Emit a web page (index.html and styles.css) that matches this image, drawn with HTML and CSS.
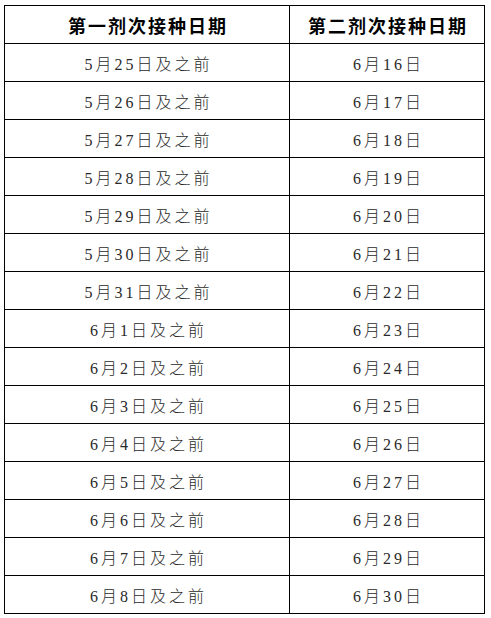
FILE: index.html
```html
<!DOCTYPE html>
<html lang="zh-CN">
<head>
<meta charset="utf-8">
<title>接种日期</title>
<link rel="stylesheet" href="styles.css">
</head>
<body>
<div class="table">
  <div class="cell head">第一剂次接种日期</div><div class="cell head">第二剂次接种日期</div>
  <div class="cell">5月25日及之前</div><div class="cell">6月16日</div>
  <div class="cell">5月26日及之前</div><div class="cell">6月17日</div>
  <div class="cell">5月27日及之前</div><div class="cell">6月18日</div>
  <div class="cell">5月28日及之前</div><div class="cell">6月19日</div>
  <div class="cell">5月29日及之前</div><div class="cell">6月20日</div>
  <div class="cell">5月30日及之前</div><div class="cell">6月21日</div>
  <div class="cell">5月31日及之前</div><div class="cell">6月22日</div>
  <div class="cell">6月1日及之前</div><div class="cell">6月23日</div>
  <div class="cell">6月2日及之前</div><div class="cell">6月24日</div>
  <div class="cell">6月3日及之前</div><div class="cell">6月25日</div>
  <div class="cell">6月4日及之前</div><div class="cell">6月26日</div>
  <div class="cell">6月5日及之前</div><div class="cell">6月27日</div>
  <div class="cell">6月6日及之前</div><div class="cell">6月28日</div>
  <div class="cell">6月7日及之前</div><div class="cell">6月29日</div>
  <div class="cell">6月8日及之前</div><div class="cell">6月30日</div>
</div>
</body>
</html>
```
FILE: styles.css
```css
html, body {
  margin: 0;
  padding: 0;
  background: #fff;
}
body {
  padding: 5px 0 0 4px;
  font-family: "Liberation Serif", "Noto Sans CJK SC", serif;
  color: #2a2a2a;
}
.table {
  display: grid;
  grid-template-columns: 285px 195px;
  grid-auto-rows: 38px;
  width: 481px;
  box-sizing: border-box;
  border-left: 1px solid #000;
  border-top: 1px solid #000;
}
.cell {
  box-sizing: border-box;
  border-right: 1px solid #000;
  border-bottom: 1px solid #000;
  display: flex;
  align-items: center;
  justify-content: center;
  font-size: 16px;
  letter-spacing: 3px;
  padding-left: 3px;
  font-weight: 300;
}
.head {
  font-size: 18px;
  font-weight: 700;
  letter-spacing: 2px;
  padding-left: 2px;
  color: #000;
}
```
